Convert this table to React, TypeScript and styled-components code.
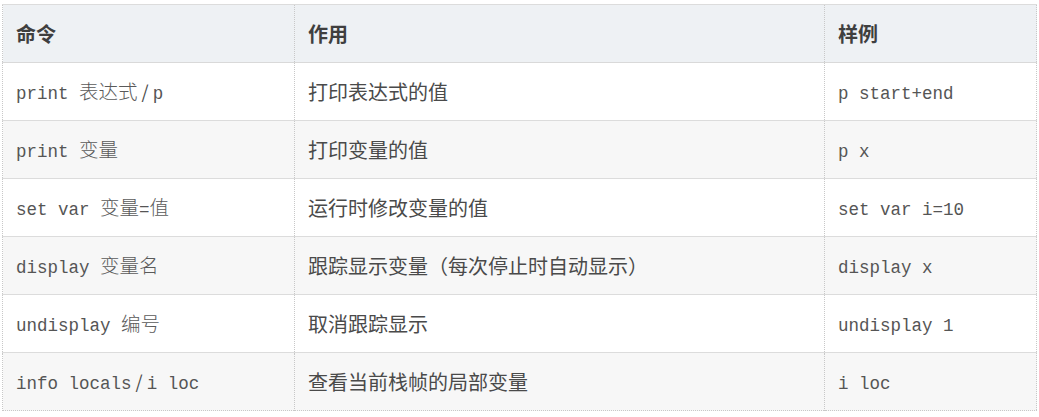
import styled, { createGlobalStyle } from "styled-components";

const GlobalStyle = createGlobalStyle`
	html, body {
		margin: 0;
		padding: 0;
		background: #ffffff;
	}
	body {
		padding: 4px 2px 0 2px;
		font-family: "Noto Sans CJK SC", "Noto Sans", sans-serif;
	}
`;

type Row = {
	cmd: string[];
	use: string;
	example: string;
};

const rows: Row[] = [
	{ cmd: ["print 表达式", "p"], use: "打印表达式的值", example: "p start+end" },
	{ cmd: ["print 变量"], use: "打印变量的值", example: "p x" },
	{ cmd: ["set var 变量=值"], use: "运行时修改变量的值", example: "set var i=10" },
	{ cmd: ["display 变量名"], use: "跟踪显示变量（每次停止时自动显示）", example: "display x" },
	{ cmd: ["undisplay 编号"], use: "取消跟踪显示", example: "undisplay 1" },
	{ cmd: ["info locals", "i loc"], use: "查看当前栈帧的局部变量", example: "i loc" },
];

// CJK glyphs inside code take two mono cells, so give them their own size
const renderCode = (text: string) =>
	text.split(/([\u4e00-\u9fff]+)/).map((part, k) =>
		/[\u4e00-\u9fff]/.test(part) ? <Wide key={k}>{part}</Wide> : part
	);

const App = () => {
	return (
		<>
			<GlobalStyle />
			<Table>
				<colgroup>
					<col style={{ width: 292 }} />
					<col style={{ width: 530 }} />
					<col />
				</colgroup>
				<thead>
					<tr>
						<HeadCell>命令</HeadCell>
						<HeadCell>作用</HeadCell>
						<HeadCell>样例</HeadCell>
					</tr>
				</thead>
				<tbody>
					{rows.map((row, i) => (
						<BodyRow key={i} $striped={i % 2 === 1}>
							<Cell>
								{row.cmd.map((c, j) => (
									<span key={j}>
										{j > 0 && <Slash> / </Slash>}
										<Code>{renderCode(c)}</Code>
									</span>
								))}
							</Cell>
							<Cell>{row.use}</Cell>
							<Cell>
								<Code>{row.example}</Code>
							</Cell>
						</BodyRow>
					))}
				</tbody>
			</Table>
		</>
	);
};

const Table = styled.table`
	width: 1035px;
	border-collapse: collapse;
	table-layout: fixed;
	border-left: 1px dotted #c8c8c8;
	border-right: 1px dotted #c8c8c8;
	border-bottom: 1px dotted #c8c8c8;
	border-top: 1px solid #dcdcdc;
	color: #4a4a4a;
`;

const HeadCell = styled.th`
	height: 57px;
	padding: 0 13px;
	text-align: left;
	font-size: 20px;
	font-weight: 700;
	color: #3f3f3f;
	background: #eef1f4;
	border-bottom: 1px solid #d9d9d9;
	border-left: 1px dotted #c8c8c8;
`;

const BodyRow = styled.tr<{ $striped: boolean }>`
	background: ${(p) => (p.$striped ? "#f7f7f7" : "#ffffff")};
	border-bottom: 1px solid #dcdcdc;

	&:last-child {
		border-bottom: 1px dotted #c8c8c8;
	}
`;

const Cell = styled.td`
	height: 57px;
	padding: 0 13px;
	font-size: 20px;
	line-height: 1.4;
	white-space: nowrap;
	border-left: 1px dotted #c8c8c8;
`;

const Code = styled.code`
	font-family: "Liberation Mono", "Noto Sans CJK SC", monospace;
	font-size: 17.5px;
	color: #555555;
`;

const Wide = styled.span`
	font-family: "Noto Sans CJK SC", sans-serif;
	font-size: 19.5px;
	font-weight: 300;
	color: #5a5a5a;
`;

const Slash = styled.span`
	font-size: 18px;
	white-space: pre;
`;

export default App;
